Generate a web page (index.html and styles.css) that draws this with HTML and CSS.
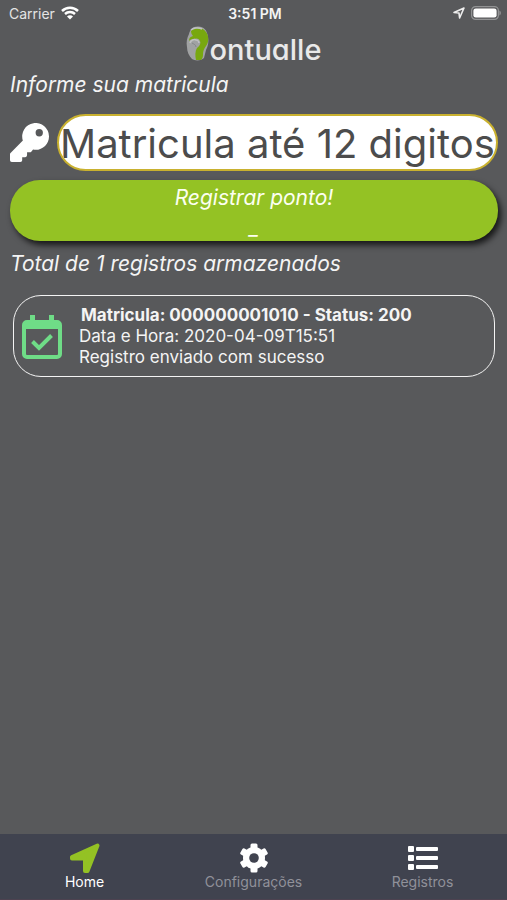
FILE: index.html
```html
<!DOCTYPE html>
<html lang="pt-BR">
<head>
<meta charset="utf-8">
<meta name="viewport" content="width=device-width, initial-scale=1">
<title>Pontualle</title>
<link rel="stylesheet" href="styles.css">
</head>
<body>
<div class="status-bar">
  <div class="carrier">
    <span>Carrier</span>
    <svg class="wifi" viewBox="0 0 18 14" aria-hidden="true">
      <path d="M1 5a11.500 11.500 0 0 1 16 0M4 8a7.400 7.400 0 0 1 10 0" fill="none" stroke="#fff" stroke-width="2.500"/>
      <path d="M9 13.600 6 10.600a4 4 0 0 1 6 0z" fill="#fff"/>
    </svg>
  </div>
  <span class="clock">3:51 PM</span>
  <div class="device">
    <svg class="location" viewBox="0 0 12 12" aria-hidden="true">
      <path d="M1 5.500 11 1 6.600 11 6 6z" fill="none" stroke="#eee" stroke-width="1.600" stroke-linejoin="round"/>
    </svg>
    <svg class="battery" viewBox="0 0 30 14" aria-hidden="true">
      <rect x=".6" y=".6" width="26.800" height="12.800" rx="4" fill="none" stroke="#929394" stroke-width="1.200"/>
      <rect x="2.400" y="2.400" width="23.200" height="9.200" rx="2.400" fill="#fff"/>
      <path d="M28.400 4.600c2 .8 2 4 0 4.800z" fill="#929394"/>
    </svg>
  </div>
</div>

<header class="brand">
  <svg class="brand-mark" viewBox="0 0 24 36" aria-hidden="true">
    <path d="M12 .5C6 .5 4 4 3 8c-2 4-3 8-2 13 0 5 2 9 5 12 3 2 9 2 12-1l2-8c2-4 3-8 2-13C21 4 18 .5 12 .5z" fill="#a0a2a3"/>
    <path d="M5 5c3-4 12-4 15 1 3 4 3 10 0 14-2 3-3 5-3 8 0 2 0 4-2 6h-5c-1-4-1-9 1-12 3-2 4-5 3-7-1-3-4-3-7-2-2 0-3 1-4 2 0-3 1-4 4-5-1-1-2-3-2-5z" fill="#78a80f"/>
    <path d="M4 17c1-3 4-4 6-3 2 0 3 2 3 3M5 4c2-2 7-3 11-1" fill="none" stroke="#bfc1c2" stroke-width="1.500"/>
    <path d="M6 17c2 1 4 2 4 4" fill="none" stroke="#848789" stroke-width="1"/>
  </svg>
  <span class="brand-name">ontualle</span>
</header>

<main class="content">
  <label class="heading" for="matricula">Informe sua matricula</label>
  <div class="field">
    <svg class="key" viewBox="0 0 512 512" aria-hidden="true">
      <path fill="#fff" d="M512 176c0 97-79 176-176 176-11 0-22-1-33-3l-24 27a24 24 0 0 1-18 8h-37v40a24 24 0 0 1-24 24h-40v40a24 24 0 0 1-24 24H24a24 24 0 0 1-24-24v-78a24 24 0 0 1 7-17l162-162a176 176 0 1 1 343-55zm-176-48a48 48 0 1 0 96 0 48 48 0 0 0-96 0z"/>
    </svg>
    <input class="matricula" id="matricula" type="text" maxlength="12" placeholder="Matricula até 12 digitos">
  </div>
  <button class="submit" type="button"><span>Registrar ponto!</span><span>_</span></button>
  <h2 class="heading total">Total de 1 registros armazenados</h2>
  <article class="record">
    <svg class="calendar" viewBox="0 0 40 46" aria-hidden="true">
      <path fill="#6fdc87" fill-rule="evenodd" d="M8 1h5v5h14V1h5v5h3a5 5 0 0 1 5 5v29a5 5 0 0 1-5 5H5a5 5 0 0 1-5-5V11a5 5 0 0 1 5-5h3zM4 15v25q0 1 1 1h30q1 0 1-1V15z"/>
      <path d="m10.500 27.500 6.500 6.500L29.500 21.500" fill="none" stroke="#6fdc87" stroke-width="4"/>
    </svg>
    <div class="record-text">
      <h3 class="record-title">Matricula: 000000001010 - Status: 200</h3>
      <p>Data e Hora: 2020-04-09T15:51</p>
      <p>Registro enviado com sucesso</p>
    </div>
  </article>
</main>

<nav class="tabs">
  <a class="tab active" href="#home">
    <svg class="tab-icon" viewBox="0 0 30 30" aria-hidden="true">
      <path d="M2 14 27.500 2.500 17.500 28H15V15.500H2z" fill="#94c224" stroke="#94c224" stroke-width="4" stroke-linejoin="round"/>
    </svg>
    Home
  </a>
  <a class="tab" href="#configuracoes">
    <svg class="tab-icon" viewBox="0 0 30 30" aria-hidden="true">
      <g fill="#fff">
        <rect x="11.500" y="0.500" width="7" height="29" rx="1.500"/>
        <rect x="11.500" y="0.500" width="7" height="29" rx="1.500" transform="rotate(60 15 15)"/>
        <rect x="11.500" y="0.500" width="7" height="29" rx="1.500" transform="rotate(120 15 15)"/>
        <circle cx="15" cy="15" r="11"/>
      </g>
      <circle cx="15" cy="15" r="4.800" fill="#40434f"/>
    </svg>
    Configurações
  </a>
  <a class="tab" href="#registros">
    <svg class="tab-icon" viewBox="0 0 30 30" aria-hidden="true">
      <g fill="#fff">
        <rect x="0" y="3" width="6" height="6" rx="1"/><rect x="8" y="4" width="22" height="4" rx="1"/>
        <rect x="0" y="12" width="6" height="6" rx="1"/><rect x="8" y="13" width="22" height="4" rx="1"/>
        <rect x="0" y="21" width="6" height="6" rx="1"/><rect x="8" y="22" width="22" height="4" rx="1"/>
      </g>
    </svg>
    Registros
  </a>
</nav>
</body>
</html>
```
FILE: styles.css
```css
* {
  box-sizing: border-box;
}

body {
  margin: 0;
  min-height: 100vh;
  display: flex;
  flex-direction: column;
  background: #58595b;
  color: #f4f4f4;
  font-family: Inter, "Liberation Sans", sans-serif;
}

h2, h3, p {
  margin: 0;
}

svg {
  display: block;
  flex: none;
}

.status-bar {
  display: grid;
  grid-template-columns: 1fr auto 1fr;
  align-items: center;
  height: 26px;
  padding: 0 6px 0 9px;
  font-size: 14px;
}

.carrier, .device {
  display: flex;
  align-items: center;
  gap: 6px;
}

.carrier {
  color: #e4e4e4;
}

.device {
  justify-content: flex-end;
}

.wifi {
  width: 18px;
  height: 14px;
}

.clock {
  font-weight: 600;
}

.location {
  width: 12px;
  height: 12px;
}

.battery {
  width: 30px;
  height: 14px;
}

.brand {
  display: flex;
  justify-content: center;
  height: 41px;
}

.brand-mark {
  width: 24px;
  height: 36px;
}

.brand-name {
  font-size: 29px;
  line-height: 48px;
  font-weight: 500;
  font-feature-settings: "cv11";
  color: #e9e9e9;
}

.content {
  flex: 1;
  display: flex;
  flex-direction: column;
  padding: 0 9px 0 10px;
}

.heading {
  font-size: 21px;
  line-height: 36px;
  font-weight: 400;
  font-style: italic;
}

.field {
  display: flex;
  align-items: center;
  gap: 8px;
  margin-top: 11px;
}

.key {
  width: 39px;
  height: 39px;
}

.matricula {
  flex: 1;
  min-width: 0;
  height: 57px;
  padding: 2px 1px 0;
  border: 2px solid #c9b12f;
  border-radius: 29px;
  background: #fff;
  color: #4c4c4c;
  font: 40px Inter, "Liberation Sans", sans-serif;
}

.matricula::placeholder {
  color: #4c4c4c;
  opacity: 1;
}

.submit {
  display: flex;
  flex-direction: column;
  align-items: center;
  margin-top: 9px;
  padding: 0 0 1px;
  border: 0;
  border-radius: 30px;
  background: #94c224;
  box-shadow: 3px 4px 6px rgba(0, 0, 0, 0.75);
  color: #fcfff0;
  font: italic 21px Inter, "Liberation Sans", sans-serif;
}

.submit span {
  height: 30px;
  line-height: 35px;
}

.total {
  margin-top: 5px;
}

.record {
  display: flex;
  align-items: center;
  gap: 17px;
  margin: 13px 3px 0;
  padding: 9px 8px 8px;
  border: 1px solid #f4f4f4;
  border-radius: 28px;
}

.calendar {
  width: 40px;
  height: 46px;
}

.record-text {
  font-size: 17px;
  line-height: 21px;
}

.record-title {
  padding-left: 2px;
  font-size: 17px;
  font-weight: 700;
}

.tabs {
  display: grid;
  grid-template-columns: repeat(3, 1fr);
  height: 66px;
  background: #40434f;
  border-bottom: 1px solid #4d4250;
}

.tab {
  display: flex;
  flex-direction: column;
  align-items: center;
  padding-top: 9px;
  color: #90919a;
  font-size: 14px;
  line-height: 18px;
  text-decoration: none;
}

.tab.active {
  color: #fff;
}

.tab-icon {
  width: 30px;
  height: 30px;
}
```
